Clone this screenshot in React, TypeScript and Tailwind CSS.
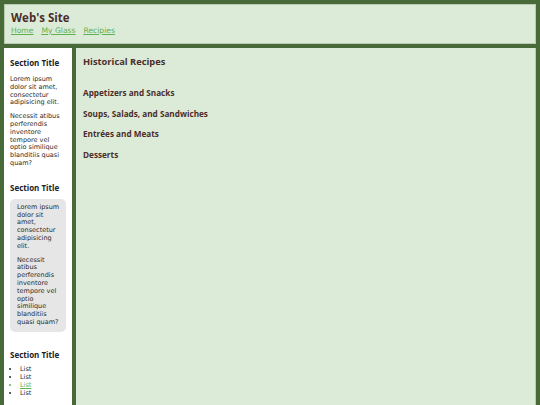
const body = "font-['DejaVu_Sans',sans-serif]";
const head = "font-['Open_Sans',sans-serif] font-bold";

function SectionTitle({ children }: { children: string }) {
  return <h2 className={`${head} text-[8px] leading-[10px] text-[#222]`}>{children}</h2>;
}

function Paras() {
  return (
    <>
      <p>Lorem ipsum dolor sit amet, consectetur adipisicing elit.</p>
      <p className="mt-[6px]">
        Necessit atibus perferendis inventore tempore vel optio similique blanditiis quasi quam?
      </p>
    </>
  );
}

export default function App() {
  const recipes = ['Appetizers and Snacks', 'Soups, Salads, and Sandwiches', 'Entrées and Meats', 'Desserts'];
  return (
    <div className="w-[540px] h-[405px] bg-[#476a38] px-[4px] pt-[4px] flex flex-col gap-[4px] overflow-hidden">
      <header className="h-[40px] shrink-0 bg-[#dcebd8] border border-[#b9cbb1] px-[6px] pt-[5px]">
        <h1 className={`${head} text-[11.5px] leading-[15px] text-[#4b2d2a]`}>Web's Site</h1>
        <nav className={`${body} flex gap-[8px] text-[7.6px] leading-[12px] text-[#62b04c] underline`}>
          <a href="#">Home</a>
          <a href="#">My Glass</a>
          <a href="#">Recipies</a>
        </nav>
      </header>
      <div className="flex-1 flex gap-[4px] min-h-0">
        <aside className={`${body} w-[68px] shrink-0 bg-white px-[6px] pt-[10px] text-[6.5px] leading-[7.8px] text-[#2a2a2a]`}>
          <SectionTitle>Section Title</SectionTitle>
          <div className="mt-[8px]">
            <Paras />
          </div>
          <div className="mt-[15px]">
            <SectionTitle>Section Title</SectionTitle>
          </div>
          <div className="mt-[6px] bg-[#e6e6e6] rounded-[5px] pl-[7px] pr-[4px] py-[5px]">
            <Paras />
          </div>
          <div className="mt-[18px]">
            <SectionTitle>Section Title</SectionTitle>
          </div>
          <ul className="mt-[5px] list-disc pl-[10px] leading-[8px]">
            <li>List</li>
            <li>List</li>
            <li className="text-[#62b04c] underline">List</li>
            <li>List</li>
          </ul>
        </aside>
        <main className="flex-1 bg-[#dcebd8] border-r border-[#b9cbb1] px-[7px] pt-[7px]">
          <h2 className={`${head} text-[9.3px] leading-[14px] text-[#4b2d2a]`}>Historical Recipes</h2>
          <div className="mt-[18px] flex flex-col gap-[8px]">
            {recipes.map((r) => (
              <h3 key={r} className={`${head} text-[8.2px] leading-[12.5px] text-[#4b2d2a]`}>{r}</h3>
            ))}
          </div>
        </main>
      </div>
    </div>
  );
}
